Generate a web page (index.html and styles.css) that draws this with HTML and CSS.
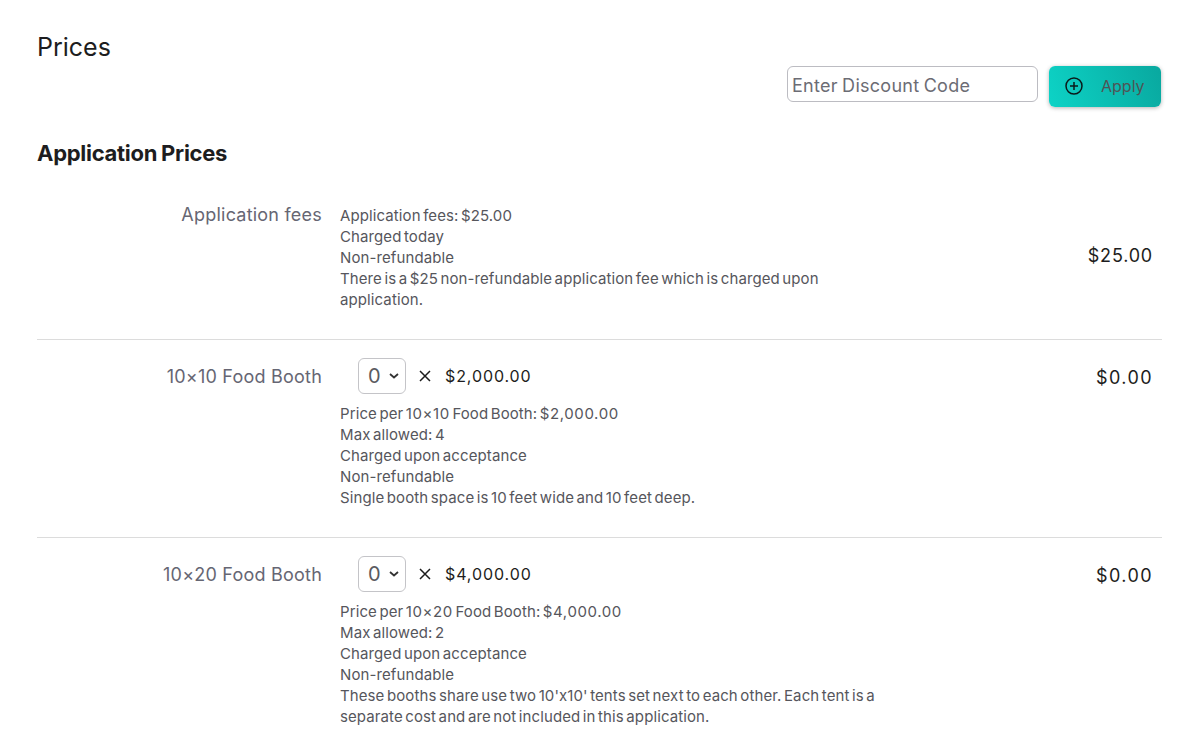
FILE: index.html
```html
<!DOCTYPE html>
<html lang="en">
<head>
<meta charset="utf-8">
<title>Prices</title>
<link rel="stylesheet" href="styles.css">
</head>
<body>
<main class="page">
  <header class="top">
    <h1 class="title">Prices</h1>
    <div class="discount">
      <input class="code" type="text" placeholder="Enter Discount Code">
      <button class="apply" type="button">
        <svg class="plus" viewBox="0 0 18 18" width="18" height="18" aria-hidden="true"><circle cx="9" cy="9" r="8" fill="none" stroke="#0b1a1a" stroke-width="1.5"/><path d="M9 5v8M5 9h8" fill="none" stroke="#0b1a1a" stroke-width="1.5"/></svg>
        <span>Apply</span>
      </button>
    </div>
  </header>
  <h2 class="section">Application Prices</h2>
  <section class="row first">
    <div class="label">Application fees</div>
    <div class="body">
      <p class="details">Application fees: $25.00<br>Charged today<br>Non-refundable<br>There is a $25 non-refundable application fee which is charged upon application.</p>
    </div>
    <div class="total middle">$25.00</div>
  </section>
  <section class="row">
    <div class="label">10×10 Food Booth</div>
    <div class="body">
      <div class="qty">
        <div class="select"><span>0</span><svg viewBox="0 0 10 6" width="10" height="6" aria-hidden="true"><path d="M1 1l4 3.5L9 1" fill="none" stroke="#333" stroke-width="1.8"/></svg></div>
        <svg class="times" viewBox="0 0 12 12" width="12" height="12" aria-hidden="true"><path d="M1 1l10 10M11 1L1 11" fill="none" stroke="#1c1c1c" stroke-width="1.5"/></svg>
        <span class="unit">$2,000.00</span>
      </div>
      <p class="details">Price per <span class="amt">10×10</span> Food Booth: <span class="amt">$2,000.00</span><br>Max allowed: 4<br>Charged upon acceptance<br>Non-refundable<br>Single booth space is 10 feet wide and 10 feet deep.</p>
    </div>
    <div class="total">$0.00</div>
  </section>
  <section class="row">
    <div class="label">10×20 Food Booth</div>
    <div class="body">
      <div class="qty">
        <div class="select"><span>0</span><svg viewBox="0 0 10 6" width="10" height="6" aria-hidden="true"><path d="M1 1l4 3.5L9 1" fill="none" stroke="#333" stroke-width="1.8"/></svg></div>
        <svg class="times" viewBox="0 0 12 12" width="12" height="12" aria-hidden="true"><path d="M1 1l10 10M11 1L1 11" fill="none" stroke="#1c1c1c" stroke-width="1.5"/></svg>
        <span class="unit">$4,000.00</span>
      </div>
      <p class="details">Price per <span class="amt">10×20</span> Food Booth: <span class="amt">$4,000.00</span><br>Max allowed: 2<br>Charged upon acceptance<br>Non-refundable<br>These booths share use two 10'x10' tents set next to each other. Each tent is a separate cost and are not included in this application.</p>
    </div>
    <div class="total">$0.00</div>
  </section>
</main>
</body>
</html>
```
FILE: styles.css
```css
* { box-sizing: border-box; }
html, body { margin: 0; height: 755px; overflow: hidden; background: #fff; }
body { font-family: "Inter", "Liberation Sans", sans-serif; color: #1d1d20; }
.page { padding: 31px 29px 0 37px; }
.top { display: flex; justify-content: space-between; align-items: flex-start; }
.title { margin: 0; font-size: 25px; line-height: 32px; font-weight: 400; letter-spacing: 0; }
.discount { display: flex; align-items: flex-start; gap: 11px; margin-top: 35px; margin-right: 1px; }
.code { width: 251px; height: 36px; padding: 2px 4px 0; border: 1px solid #bcbcc2; border-radius: 6px; font: 18px/24px "Inter", sans-serif; letter-spacing: 0.27px; word-spacing: -1px; outline: none; }
.code::placeholder { color: #6c6c74; opacity: 1; }
.apply { display: flex; align-items: center; gap: 18px; width: 112px; height: 41px; padding: 0 0 1px 16px; border: 0; border-radius: 6px; background: linear-gradient(70deg, #0dd3c6, #09a89f); box-shadow: 0 1px 4px rgba(0,0,0,.3); color: #4f5555; font: 16px/20px "Inter", sans-serif; }
.section { margin: 31px 0 0; font-size: 22px; line-height: 30px; font-weight: 700; letter-spacing: -0.28px; word-spacing: -1px; }
.row { display: flex; align-items: flex-start; padding: 18px 0 29px; border-top: 1px solid #dcdcdc; }
.row.first { border-top: 0; margin-top: 35px; padding: 0 0 28px; min-height: 136px; }
.label { width: 285px; flex: none; text-align: right; font-size: 18px; line-height: 24px; color: #666673; letter-spacing: 0.22px; }
.row:not(.first) .label { margin-top: 7px; }
.body { width: 540px; flex: none; margin-left: 18px; }
.row.first .body { padding-top: 1px; }
.row.first .details { padding-top: 1px; }
.details { margin: 0; font-size: 15px; line-height: 21px; color: #56565c; letter-spacing: 0.1px; word-spacing: -1.8px; }
.amt { letter-spacing: 0.6px; }
.qty { display: flex; align-items: center; height: 36px; padding-left: 18px; margin-bottom: 9px; }
.select { display: flex; align-items: center; justify-content: space-between; width: 48px; height: 36px; padding: 0 6px 0 9px; border: 1px solid #c4c4c8; border-radius: 6px; font-size: 20px; color: #5a5a60; }
.times { margin-left: 13px; }
.unit { margin-left: 14px; font-size: 16px; letter-spacing: 0.9px; color: #1d1d20; }
.total { flex: 1; text-align: right; padding: 8px 9px 0 0; font-size: 18px; line-height: 24px; letter-spacing: 1.4px; color: #1d1d20; }
.total.middle { align-self: center; padding-top: 0; margin-bottom: 3px; letter-spacing: 0.8px; }
```
